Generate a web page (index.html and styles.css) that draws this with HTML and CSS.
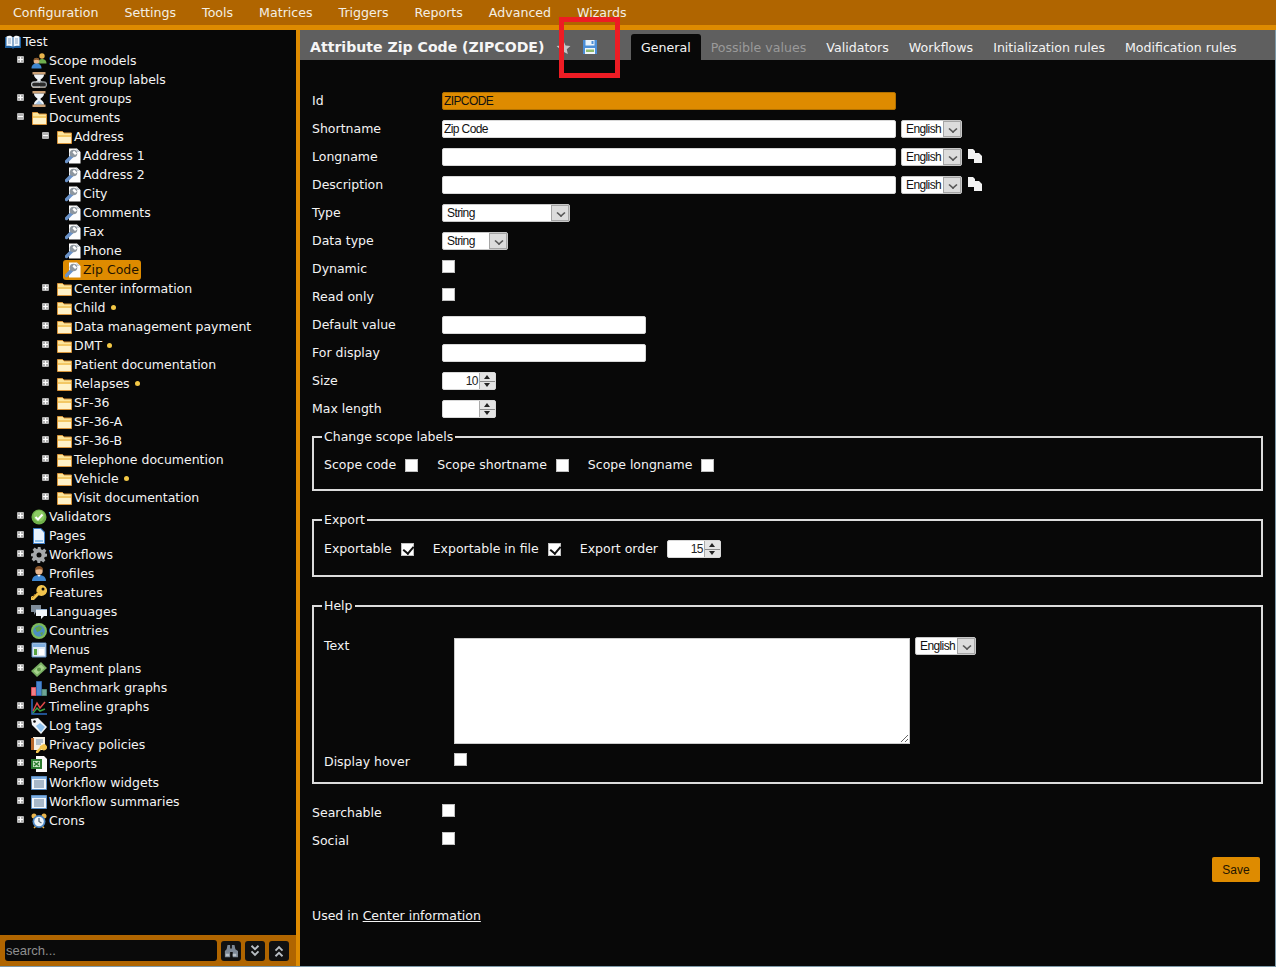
FILE: index.html
```html
<!DOCTYPE html>
<html lang="en">
<head>
<meta charset="utf-8">
<title>Attribute Zip Code</title>
<link rel="stylesheet" href="styles.css">
</head>
<body>
<svg class="defs" width="0" height="0" aria-hidden="true">
  <symbol id="i-book" viewBox="0 0 16 16"><path d="M0 3h16v11H9l-1 1-1-1H0z" fill="#1f5f9e"/><path d="M1.500 2.500C3.500 1.500 6 1.500 7.500 3v9.500C6 11.500 3.500 11.500 1.500 12zM14.500 2.500C12.500 1.500 10 1.500 8.500 3v9.500c1.500-1 4-1 6-.5z" fill="#f4f8fc"/><path d="M3 5h3M3 7h3M3 9h3M10 5h3M10 7h3M10 9h3" stroke="#8aa6c4"/></symbol>
  <symbol id="i-users" viewBox="0 0 16 16"><circle cx="11" cy="3" r="2.700" fill="#e9b44c"/><path d="M7 10.500c0-3 2-4.500 4-4.500s4.500 1 4.500 4.500z" fill="#6fae4e"/><circle cx="5.500" cy="8" r="2.900" fill="#e8b48a"/><path d="M2.700 7.500c0-2 1.500-2.800 2.800-2.800s2.800.8 2.800 2.800C6.500 6.500 4.500 6.500 2.700 7.500z" fill="#8a5a2b"/><path d="M.5 15.500c0-3.500 2-5 5-5s5 1.500 5 5z" fill="#3f86d0"/></symbol>
  <symbol id="i-hour" viewBox="0 0 16 16"><path d="M1.500 0h13v2.500h-13zM1.500 13.500h13V16h-13z" fill="#c99f75"/><path d="M3 2.500h10C13 6 9.500 7 9.500 8s3.500 2 3.500 5.500H3C3 10 6.500 9 6.500 8S3 6 3 2.500z" fill="#f0f4f8"/><path d="M4.500 13h7L8 9.500z" fill="#a9c8e6"/></symbol>
  <symbol id="i-hourlink" viewBox="0 0 16 16"><use href="#i-hour"/><path d="M3 10h5a2.500 2.500 0 010 5H3a2.500 2.500 0 010-5z" fill="#2a2a2a" stroke="#b6babe" stroke-width="1.300"/><path d="M9 10h4a2.500 2.500 0 010 5H9" fill="#2a2a2a" stroke="#8d9297" stroke-width="1.300"/></symbol>
  <symbol id="i-folder" viewBox="0 0 16 16"><path d="M1.500 2.500h5l1.500 1.500h7.500v10.500h-14z" fill="#fce59b" stroke="#d9953a"/><path d="M2 6h13v2H2z" fill="#f3c865"/><path d="M2 8h13v6H2z" fill="#fff2c8"/></symbol>
  <symbol id="i-attr" viewBox="0 0 16 16"><path d="M4 .500h8l3.500 3.500v11.500H4z" fill="#fdfdfd"/><path d="M11.500.500V4h3.500z" fill="#c7ced6"/><path d="M1.500 13.500L7 8" stroke="#6a92c8" stroke-width="3.400" stroke-linecap="round"/><circle cx="8.500" cy="5.500" r="3.800" fill="#8e979f"/><path d="M9 2.500l3 3-2 1.500-2.500-2.500z" fill="#fff"/></symbol>
  <symbol id="i-check" viewBox="0 0 16 16"><circle cx="8" cy="8" r="7.500" fill="#6eb04a"/><circle cx="8" cy="7" r="5.500" fill="#8ccb63"/><path d="M4.500 8l2.500 2.500 4.500-5" fill="none" stroke="#fff" stroke-width="2"/></symbol>
  <symbol id="i-page" viewBox="0 0 16 16"><path d="M2 0h8l4 4v12H2z" fill="#3d7cc4"/><path d="M3 1h6.500L13 4.500V15H3z" fill="#e8f2fc"/><path d="M4 12h8v2H4z" fill="#8cc1ee"/></symbol>
  <symbol id="i-gear" viewBox="0 0 16 16"><path d="M6.500 0h3l.4 2.300 1.500.6 1.900-1.300 2.100 2.100-1.300 1.900.6 1.500L16 6.500v3l-2.300.4-.6 1.500 1.300 1.900-2.100 2.100-1.900-1.300-1.500.6L9.500 16h-3l-.4-2.300-1.500-.6-1.900 1.300-2.100-2.100 1.300-1.900-.6-1.500L0 9.500v-3l2.300-.4.6-1.500-1.300-1.900 2.100-2.100 1.900 1.300 1.500-.6z" fill="#a5a8ab"/><circle cx="8" cy="8" r="2.500" fill="#0a0a0a"/></symbol>
  <symbol id="i-profile" viewBox="0 0 16 16"><circle cx="8" cy="5" r="3.700" fill="#eab88e"/><path d="M4 4c0-3 2-4 4-4s4 1 4 4C10 3 7 3 4 4z" fill="#8a552a"/><path d="M1 15c0-4 3-6 7-6s7 2 7 6z" fill="#3f86d0"/><path d="M6.500 9h3L8 11z" fill="#fff"/></symbol>
  <symbol id="i-key" viewBox="0 0 16 16"><path d="M10.500 0a5.500 5.500 0 11-2.800 10.200L3 15H0v-3l1-1h1.500l.5-1.500h1.500L6 8a5.500 5.500 0 014.500-8z" fill="#f2c44e"/><circle cx="12" cy="4" r="1.500" fill="#0a0a0a"/><path d="M1 13l6-6" stroke="#b98520"/></symbol>
  <symbol id="i-chat" viewBox="0 0 16 16"><path d="M0 1h10v7H5l-2 3V8H0z" fill="#7e8b98"/><path d="M5 5h11v7h-3l-3 3v-3H5z" fill="#f2f6fb"/><path d="M5 5h11v1H5z" fill="#9db8d4"/></symbol>
  <symbol id="i-globe" viewBox="0 0 16 16"><circle cx="8" cy="8" r="8" fill="#7dbb5a"/><circle cx="8" cy="8" r="5.800" fill="#4b8fc2"/><path d="M4 5l4-2 3 2-2 3-3 1zM9 10l3-1-1 4z" fill="#5fa24a"/></symbol>
  <symbol id="i-menu" viewBox="0 0 16 16"><path d="M1 1h14v14H1z" fill="#dfeaf5" stroke="#5b8cc2"/><path d="M2 2h12v3H2z" fill="#7eaee0"/><path d="M3 7h3v6H3z" fill="#5aa342"/><path d="M8 7h5v6H8z" fill="#fff"/></symbol>
  <symbol id="i-money" viewBox="0 0 16 16"><path d="M0 10L10 1l6 6-10 9z" fill="#79b063"/><path d="M2.500 10l7.500-6.500 3.500 3.500-7.500 6.500z" fill="#a6d48c"/><circle cx="8" cy="8.500" r="2" fill="#5a9445"/></symbol>
  <symbol id="i-bars" viewBox="0 0 16 16"><path d="M.5 7.500h4.500v8H.5z" fill="#f08088" stroke="#d84a55"/><path d="M5.500 1.500H10.500v14H5.500z" fill="#4a88cf" stroke="#2f62a8"/><path d="M11 9.500h4.500v6H11z" fill="#6fa595" stroke="#4e8674"/></symbol>
  <symbol id="i-line" viewBox="0 0 16 16"><path d="M1 0v15h15" fill="none" stroke="#2b6cc0" stroke-width="1.500"/><path d="M2 12L6 4l3 5 5-6" fill="none" stroke="#e04848" stroke-width="1.500"/><path d="M2 14l4-5 3 3 5-2" fill="none" stroke="#3aa142" stroke-width="1.500"/></symbol>
  <symbol id="i-tag" viewBox="0 0 16 16"><path d="M0 1l7-1 9 9-6 7-9-9z" fill="#f0f3f6"/><path d="M5 8l4-3 5 4-4 5z" fill="#8cc1ee"/><circle cx="3.500" cy="3.500" r="1.300" fill="#0a0a0a"/></symbol>
  <symbol id="i-privacy" viewBox="0 0 16 16"><path d="M2 0h12v13H2z" fill="#f5f0e6"/><path d="M0 1h3v12H0z" fill="#b8672a"/><path d="M5 3h7M5 5h7M5 7h5" stroke="#6f8fb3"/><path d="M11 8a3 3 0 11-.5 4L7 16H5v-2l3.500-3a3 3 0 012.500-3z" fill="#f2c44e"/></symbol>
  <symbol id="i-report" viewBox="0 0 16 16"><path d="M5 0h8l3 3v13H5z" fill="#fbfbfb"/><path d="M0 3h11v10H0z" fill="#2e7d32"/><path d="M2 5h7v6H2z" fill="#c6e3c0"/><path d="M3 6l5 4M8 6l-5 4" stroke="#2e7d32" stroke-width="1.300"/></symbol>
  <symbol id="i-list" viewBox="0 0 16 16"><path d="M.5 1.500h15v13H.5z" fill="#f2f6fb" stroke="#5b8cc2"/><path d="M1 2h14v2H1z" fill="#7eaee0"/><path d="M3 6h10M3 8h10M3 10h10M3 12h10" stroke="#5d7896"/></symbol>
  <symbol id="i-clock" viewBox="0 0 16 16"><circle cx="3" cy="3" r="2.500" fill="#e9b44c"/><circle cx="13" cy="3" r="2.500" fill="#e9b44c"/><path d="M3 15l2-2M13 15l-2-2" stroke="#e9b44c" stroke-width="1.500"/><circle cx="8" cy="8.500" r="6.500" fill="#4b86c4"/><circle cx="8" cy="8.500" r="4.800" fill="#eef4fa"/><path d="M8 5v3.500l2.500 1.500" fill="none" stroke="#5a6b7c" stroke-width="1.300"/></symbol>
  <symbol id="i-star" viewBox="0 0 16 16"><path d="M8 1l2.200 4.800 5.200.6-3.900 3.500 1.100 5.100L8 12.400 3.400 15l1.100-5.100L.6 6.400l5.200-.6z" fill="#c5c6c7"/></symbol>
  <symbol id="i-floppy" viewBox="0 0 16 16"><path d="M1 1h14v14H1z" fill="#4b8ed8"/><path d="M3.500 1h9v5.500h-9z" fill="#e9f2fb"/><path d="M9.500 2h2v3h-2z" fill="#4b8ed8"/><path d="M3 9h10v6H3z" fill="#f2f6fb"/><path d="M4 10.500h8v2.500H4z" fill="#8fbb6a"/></symbol>
  <symbol id="i-binoc" viewBox="0 0 16 16"><path d="M4 1h3v4h2V1h3l1 5 3 2v7h-6V9H7v6H1V8l2-2z" fill="#7d8896"/><path d="M2 11h4v3H2zM10 11h4v3h-4z" fill="#b9c1ca"/></symbol>
  <symbol id="i-down" viewBox="0 0 16 16"><path d="M4 2l4 4 4-4M4 8.500l4 4 4-4" fill="none" stroke="#b9bec3" stroke-width="2.200"/></symbol>
  <symbol id="i-up" viewBox="0 0 16 16"><path d="M4 7.500l4-4 4 4M4 14l4-4 4 4" fill="none" stroke="#b9bec3" stroke-width="2.200"/></symbol>
  <symbol id="i-copy" viewBox="0 0 14 14"><path d="M0 0h5l2 2v8H0z" fill="#f2f2f2"/><path d="M6 4h5l3 3v7H6z" fill="#f2f2f2"/></symbol>
</svg>

<nav class="menu">
  <a>Configuration</a><a>Settings</a><a>Tools</a><a>Matrices</a><a>Triggers</a><a>Reports</a><a>Advanced</a><a>Wizards</a>
</nav>

<div class="app">
  <aside class="side">
    <div class="tree">
      <div class="row root"><svg class="ic"><use href="#i-book"/></svg><span>Test</span></div>
      <div class="row d1"><i class="tog plus"></i><svg class="ic"><use href="#i-users"/></svg><span>Scope models</span></div>
      <div class="row d1"><i class="tog none"></i><svg class="ic"><use href="#i-hourlink"/></svg><span>Event group labels</span></div>
      <div class="row d1"><i class="tog plus"></i><svg class="ic"><use href="#i-hour"/></svg><span>Event groups</span></div>
      <div class="row d1"><i class="tog minus"></i><svg class="ic"><use href="#i-folder"/></svg><span>Documents</span></div>
      <div class="row d2"><i class="tog minus"></i><svg class="ic"><use href="#i-folder"/></svg><span>Address</span></div>
      <div class="row d3"><svg class="ic"><use href="#i-attr"/></svg><span>Address 1</span></div>
      <div class="row d3"><svg class="ic"><use href="#i-attr"/></svg><span>Address 2</span></div>
      <div class="row d3"><svg class="ic"><use href="#i-attr"/></svg><span>City</span></div>
      <div class="row d3"><svg class="ic"><use href="#i-attr"/></svg><span>Comments</span></div>
      <div class="row d3"><svg class="ic"><use href="#i-attr"/></svg><span>Fax</span></div>
      <div class="row d3"><svg class="ic"><use href="#i-attr"/></svg><span>Phone</span></div>
      <div class="row d3"><div class="sel"><svg class="ic"><use href="#i-attr"/></svg><span>Zip Code</span></div></div>
      <div class="row d2"><i class="tog plus"></i><svg class="ic"><use href="#i-folder"/></svg><span>Center information</span></div>
      <div class="row d2"><i class="tog plus"></i><svg class="ic"><use href="#i-folder"/></svg><span>Child</span><b class="dot"></b></div>
      <div class="row d2"><i class="tog plus"></i><svg class="ic"><use href="#i-folder"/></svg><span>Data management payment</span></div>
      <div class="row d2"><i class="tog plus"></i><svg class="ic"><use href="#i-folder"/></svg><span>DMT</span><b class="dot"></b></div>
      <div class="row d2"><i class="tog plus"></i><svg class="ic"><use href="#i-folder"/></svg><span>Patient documentation</span></div>
      <div class="row d2"><i class="tog plus"></i><svg class="ic"><use href="#i-folder"/></svg><span>Relapses</span><b class="dot"></b></div>
      <div class="row d2"><i class="tog plus"></i><svg class="ic"><use href="#i-folder"/></svg><span>SF-36</span></div>
      <div class="row d2"><i class="tog plus"></i><svg class="ic"><use href="#i-folder"/></svg><span>SF-36-A</span></div>
      <div class="row d2"><i class="tog plus"></i><svg class="ic"><use href="#i-folder"/></svg><span>SF-36-B</span></div>
      <div class="row d2"><i class="tog plus"></i><svg class="ic"><use href="#i-folder"/></svg><span>Telephone documention</span></div>
      <div class="row d2"><i class="tog plus"></i><svg class="ic"><use href="#i-folder"/></svg><span>Vehicle</span><b class="dot"></b></div>
      <div class="row d2"><i class="tog plus"></i><svg class="ic"><use href="#i-folder"/></svg><span>Visit documentation</span></div>
      <div class="row d1"><i class="tog plus"></i><svg class="ic"><use href="#i-check"/></svg><span>Validators</span></div>
      <div class="row d1"><i class="tog plus"></i><svg class="ic"><use href="#i-page"/></svg><span>Pages</span></div>
      <div class="row d1"><i class="tog plus"></i><svg class="ic"><use href="#i-gear"/></svg><span>Workflows</span></div>
      <div class="row d1"><i class="tog plus"></i><svg class="ic"><use href="#i-profile"/></svg><span>Profiles</span></div>
      <div class="row d1"><i class="tog plus"></i><svg class="ic"><use href="#i-key"/></svg><span>Features</span></div>
      <div class="row d1"><i class="tog plus"></i><svg class="ic"><use href="#i-chat"/></svg><span>Languages</span></div>
      <div class="row d1"><i class="tog plus"></i><svg class="ic"><use href="#i-globe"/></svg><span>Countries</span></div>
      <div class="row d1"><i class="tog plus"></i><svg class="ic"><use href="#i-menu"/></svg><span>Menus</span></div>
      <div class="row d1"><i class="tog plus"></i><svg class="ic"><use href="#i-money"/></svg><span>Payment plans</span></div>
      <div class="row d1"><i class="tog none"></i><svg class="ic"><use href="#i-bars"/></svg><span>Benchmark graphs</span></div>
      <div class="row d1"><i class="tog plus"></i><svg class="ic"><use href="#i-line"/></svg><span>Timeline graphs</span></div>
      <div class="row d1"><i class="tog plus"></i><svg class="ic"><use href="#i-tag"/></svg><span>Log tags</span></div>
      <div class="row d1"><i class="tog plus"></i><svg class="ic"><use href="#i-privacy"/></svg><span>Privacy policies</span></div>
      <div class="row d1"><i class="tog plus"></i><svg class="ic"><use href="#i-report"/></svg><span>Reports</span></div>
      <div class="row d1"><i class="tog plus"></i><svg class="ic"><use href="#i-list"/></svg><span>Workflow widgets</span></div>
      <div class="row d1"><i class="tog plus"></i><svg class="ic"><use href="#i-list"/></svg><span>Workflow summaries</span></div>
      <div class="row d1"><i class="tog plus"></i><svg class="ic"><use href="#i-clock"/></svg><span>Crons</span></div>
    </div>
    <div class="searchbar">
      <input class="search" type="text" placeholder="search...">
      <button class="sbtn"><svg class="ic"><use href="#i-binoc"/></svg></button>
      <button class="sbtn"><svg class="ic"><use href="#i-down"/></svg></button>
      <button class="sbtn"><svg class="ic"><use href="#i-up"/></svg></button>
    </div>
  </aside>

  <main class="main">
    <header class="titlebar">
      <h1>Attribute Zip Code (ZIPCODE)</h1>
      <svg class="ic star"><use href="#i-star"/></svg>
      <svg class="ic floppy"><use href="#i-floppy"/></svg>
      <div class="tabs">
        <a class="tab active">General</a><a class="tab muted">Possible values</a><a class="tab">Validators</a><a class="tab">Workflows</a><a class="tab">Initialization rules</a><a class="tab">Modification rules</a>
      </div>
    </header>

    <form class="form">
      <div class="frow"><label>Id</label><input class="txt wide readonly" value="ZIPCODE" readonly></div>
      <div class="frow"><label>Shortname</label><input class="txt wide" value="Zip Code"><div class="dd lang"><span>English</span><i></i></div></div>
      <div class="frow"><label>Longname</label><input class="txt wide"><div class="dd lang"><span>English</span><i></i></div><svg class="copy"><use href="#i-copy"/></svg></div>
      <div class="frow"><label>Description</label><input class="txt wide"><div class="dd lang"><span>English</span><i></i></div><svg class="copy"><use href="#i-copy"/></svg></div>
      <div class="frow"><label>Type</label><div class="dd type"><span>String</span><i></i></div></div>
      <div class="frow"><label>Data type</label><div class="dd dtype"><span>String</span><i></i></div></div>
      <div class="frow"><label>Dynamic</label><input class="cb" type="checkbox"></div>
      <div class="frow"><label>Read only</label><input class="cb" type="checkbox"></div>
      <div class="frow"><label>Default value</label><input class="txt mid"></div>
      <div class="frow"><label>For display</label><input class="txt mid"></div>
      <div class="frow"><label>Size</label><div class="num"><span>10</span><i class="spin"></i></div></div>
      <div class="frow"><label>Max length</label><div class="num"><span></span><i class="spin"></i></div></div>

      <fieldset class="fs fs-scope">
        <legend>Change scope labels</legend>
        <div class="inline">
          <label>Scope code</label><input class="cb" type="checkbox">
          <label>Scope shortname</label><input class="cb" type="checkbox">
          <label>Scope longname</label><input class="cb" type="checkbox">
        </div>
      </fieldset>

      <fieldset class="fs fs-export">
        <legend>Export</legend>
        <div class="inline">
          <label>Exportable</label><input class="cb" type="checkbox" checked>
          <label>Exportable in file</label><input class="cb" type="checkbox" checked>
          <label>Export order</label><div class="num"><span>15</span><i class="spin"></i></div>
        </div>
      </fieldset>

      <fieldset class="fs fs-help">
        <legend>Help</legend>
        <div class="helptext">
          <label>Text</label>
          <textarea class="area"></textarea>
          <div class="dd lang"><span>English</span><i></i></div>
        </div>
        <div class="frow hover"><label>Display hover</label><input class="cb" type="checkbox"></div>
      </fieldset>

      <div class="frow"><label>Searchable</label><input class="cb" type="checkbox"></div>
      <div class="frow"><label>Social</label><input class="cb" type="checkbox"></div>
      <div class="actions"><button class="save" type="button">Save</button></div>
      <p class="used">Used in <a href="#">Center information</a></p>
    </form>
    <div class="mark"></div>
  </main>
</div>
<div class="foot"></div>
</body>
</html>
```
FILE: styles.css
```css
* { box-sizing: border-box; }
html, body { margin: 0; padding: 0; }
body {
  width: 1276px;
  height: 967px;
  overflow: hidden;
  display: flex;
  flex-direction: column;
  background: #080808;
  color: #f4f4f4;
  font: 12.5px/16px "DejaVu Sans", Verdana, sans-serif;
}
.defs { position: absolute; }
.ic { width: 16px; height: 16px; flex: none; display: block; }

.menu {
  flex: none;
  height: 30px;
  background: #b06500;
  border-bottom: 5px solid #de8b00;
  display: flex;
  align-items: center;
  padding-left: 13px;
  gap: 26px;
  font-size: 12.6px;
  color: #f4efe4;
}

.app { flex: 1; display: flex; min-height: 0; }
.foot { flex: none; height: 1px; background: #7d99a8; }

.side {
  flex: none;
  width: 300px;
  border-right: 4px solid #de8b00;
  display: flex;
  flex-direction: column;
  background: #070707;
}
.tree { flex: 1; padding-top: 2px; }
.row { height: 19px; display: flex; align-items: center; white-space: nowrap; }
.row .ic { margin-right: 2px; }
.root { padding-left: 5px; }
.d1 { padding-left: 17px; }
.d2 { padding-left: 42px; }
.d3 { padding-left: 65px; }
.tog {
  flex: none;
  width: 7px;
  height: 7px;
  margin: -3px 7px 0 0;
  position: relative;
  border-radius: 1px;
  background: #b4b4b4;
}
.tog.none { background: none; }
.tog.plus::before, .tog.minus::before {
  content: "";
  position: absolute;
  left: 1px; right: 1px; top: 3px; height: 1px;
  background: #fff;
}
.tog.plus::after {
  content: "";
  position: absolute;
  top: 1px; bottom: 1px; left: 3px; width: 1px;
  background: #fff;
}
.sel {
  display: flex;
  align-items: center;
  height: 20px;
  margin-left: -2px;
  padding: 0 2px;
  border-radius: 3px;
  background: #de8b00;
  color: #241400;
}
.dot {
  width: 5px;
  height: 5px;
  margin-left: 5px;
  border-radius: 50%;
  background: #f3c846;
}
.searchbar {
  flex: none;
  height: 31px;
  background: #b06500;
  display: flex;
  align-items: center;
  padding: 0 7px 0 5px;
  gap: 4px;
}
.search {
  width: 212px;
  height: 21px;
  padding: 0 1px;
  border: 0;
  border-radius: 3px;
  background: #0a0a0a;
  color: #8f8f8f;
  font: 13px "Liberation Sans", Arial, sans-serif;
}
.search::placeholder { color: #8f8f8f; opacity: 1; }
.sbtn {
  width: 20px;
  height: 20px;
  padding: 3px;
  border: 0;
  border-radius: 3px;
  background: #111;
}
.sbtn .ic { width: 14px; height: 14px; }

.main {
  flex: 1;
  min-width: 0;
  position: relative;
  background: #080808;
  border-right: 1px solid #7d99a8;
}
.titlebar {
  height: 30px;
  background: #5f5f5f;
  display: flex;
  align-items: center;
  padding: 4px 0 0 10px;
}
.titlebar h1 {
  margin: 0;
  width: 246px;
  font-size: 14.1px;
  font-weight: bold;
  color: #f6f6f6;
  white-space: nowrap;
}
.star { margin-right: 11px; width: 15px; height: 15px; }
.tabs { display: flex; align-self: flex-end; height: 26px; margin-left: 33px; font-size: 12.6px; }
.tab { padding: 0 10px; line-height: 27px; color: #f4f4f4; }
.tab.active { background: #080808; border-radius: 3px 3px 0 0; }
.tab.muted { color: #9a9a9a; }

.form { padding: 27px 12px 0 12px; }
.frow { height: 28px; display: flex; align-items: center; }
.frow > label { flex: none; width: 130px; }
.txt {
  height: 18px;
  padding: 0 1px;
  border: 1px solid #d8d8d8;
  border-radius: 2px;
  background: #fff;
  color: #111;
  font: 12px "Liberation Sans", Arial, sans-serif;
  letter-spacing: -.6px;
  outline: 0;
}
.wide { width: 454px; }
.mid { width: 204px; }
.readonly { background: #de8b00; border-color: #b07000; }
.dd {
  height: 18px;
  display: flex;
  border: 1px solid #c8c8c8;
  border-radius: 2px;
  background: #fff;
  color: #111;
  font: 12px/16px "Liberation Sans", Arial, sans-serif;
  letter-spacing: -.6px;
}
.dd span { flex: 1; min-width: 0; padding-left: 4px; }
.dd i {
  flex: none;
  width: 18px;
  background: #dcdcdc;
  border: 1px solid #a5a5a5;
  position: relative;
}
.dd i::after {
  content: "";
  position: absolute;
  left: 5px; top: 3px;
  width: 6px; height: 6px;
  border-right: 2px solid #555;
  border-bottom: 2px solid #555;
  transform: scale(.8,.7) rotate(45deg);
}
.lang { width: 61px; margin-left: 5px; }
.type { width: 128px; }
.dtype { width: 66px; }
.copy { width: 14px; height: 14px; margin: -3px 0 0 6px; }
.cb {
  appearance: none;
  -webkit-appearance: none;
  flex: none;
  width: 13px;
  height: 13px;
  margin: -5px 0 0 0;
  border: 1px solid #c0c0c0;
  background: #fff;
  position: relative;
}
.cb:checked::after {
  content: "";
  position: absolute;
  left: 3px; top: 0;
  width: 5px; height: 8px;
  border-right: 2px solid #111;
  border-bottom: 2px solid #111;
  transform: rotate(40deg);
}
.num {
  width: 54px;
  height: 18px;
  display: flex;
  border: 1px solid #d8d8d8;
  border-radius: 2px;
  background: #fff;
  color: #222;
  font: 12px/16px "Liberation Sans", Arial, sans-serif;
  letter-spacing: -.5px;
}
.num span { flex: 1; text-align: right; padding-right: 1px; }
.spin {
  flex: none;
  width: 16px;
  background:
    linear-gradient(#8a8a8a, #8a8a8a) 0 50%/100% 1px no-repeat,
    #e4e4e4;
  border-left: 1px solid #aaa;
  position: relative;
}
.spin::before, .spin::after {
  content: "";
  position: absolute;
  left: 4px;
  border-left: 3px solid transparent;
  border-right: 3px solid transparent;
}
.spin::before { top: 2px; border-bottom: 4px solid #222; }
.spin::after { bottom: 2px; border-top: 4px solid #222; }

.fs {
  margin: 0;
  width: 951px;
  padding: 0 10px;
  border: 2px solid #dcdcdc;
}
.fs legend { padding: 0 2px; margin-left: -2px; line-height: 16px; }
.fs-scope { margin-top: 6px; height: 62px; }
.fs-export { margin-top: 21px; height: 65px; }
.fs-help { margin-top: 21px; height: 186px; }
.inline { display: flex; align-items: center; height: 28px; margin-top: 6px; }
.inline .cb { margin: 0 19px 0 9px; }
.inline .num { margin-left: 9px; }
.fs-export .inline { margin-top: 7px; }
.helptext { display: flex; align-items: flex-start; margin-top: 24px; }
.helptext > label { flex: none; width: 130px; }
.helptext .lang { margin-top: -1px; }
.area {
  width: 456px;
  height: 106px;
  margin: 0;
  padding: 0;
  border: 1px solid #ccc;
  background: #fff;
  display: block;
}
.hover { margin-top: 4px; }

.fs-help + .frow { margin-top: 15px; }
.actions { display: flex; justify-content: flex-end; padding-right: 3px; margin-top: 2px; }
.save {
  width: 48px;
  height: 25px;
  padding: 0;
  border: 0;
  border-radius: 2px;
  background: #de8b00;
  color: #241400;
  font: 12px "Liberation Sans", Arial, sans-serif;
}
.used { margin: 26px 0 0; }
.used a { color: #f4f4f4; text-decoration: underline; }

.mark {
  position: absolute;
  left: 259px;
  top: -13px;
  width: 61px;
  height: 61px;
  border: 5px solid #ed1c24;
}
```
